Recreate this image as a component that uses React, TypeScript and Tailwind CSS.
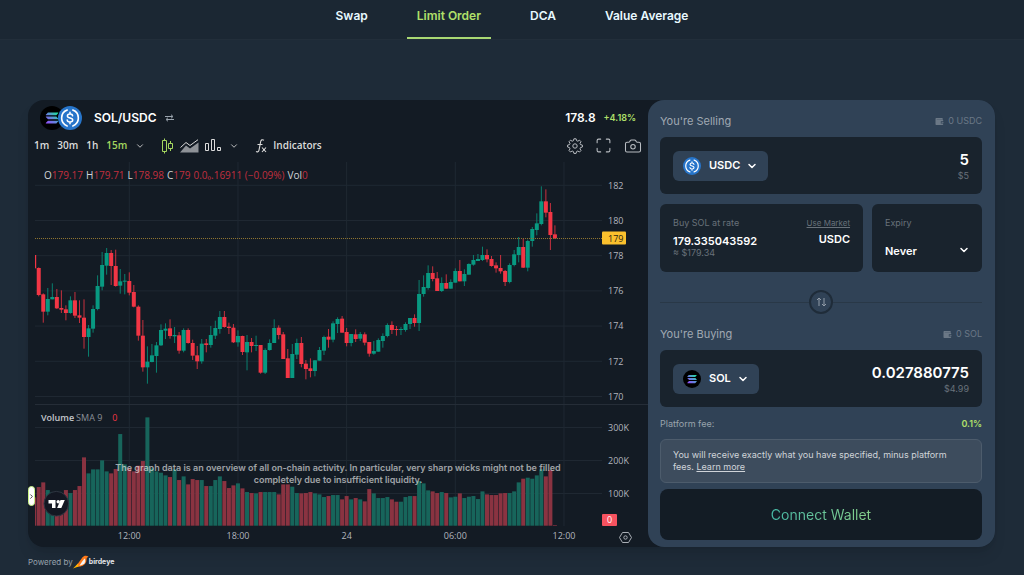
import { useState } from "react";
import { ChevronDown, ChevronRight, Camera, Maximize } from "lucide-react";

// [up, high, body top, body bottom, low, volume in K]
// price values are steps of about 2 cents, counted down from 182.3
const candles: number[][] = [
    [0, 225, 225, 265, 265, 85], [0, 262, 264, 345, 349, 116], [0, 340, 343, 395, 428, 130], [1, 324, 357, 395, 406, 107],
    [1, 310, 351, 358, 358, 100], [0, 327, 351, 385, 387, 92], [0, 331, 384, 389, 399, 97], [0, 376, 388, 399, 421, 107],
    [1, 349, 361, 399, 401, 98], [0, 336, 361, 407, 414, 107], [0, 361, 406, 413, 429, 119], [0, 358, 413, 471, 506, 205],
    [1, 435, 445, 471, 530, 157], [1, 376, 387, 446, 458, 169], [1, 286, 318, 387, 391, 169], [1, 216, 255, 320, 331, 196],
    [1, 204, 219, 257, 284, 163], [0, 210, 219, 258, 315, 157], [0, 209, 258, 318, 320, 170], [1, 267, 304, 317, 341, 275],
    [1, 282, 302, 305, 343, 184], [0, 277, 303, 338, 346, 172], [0, 315, 336, 380, 382, 163], [0, 376, 380, 467, 482, 180],
    [0, 420, 467, 562, 575, 194], [1, 499, 545, 562, 611, 325], [1, 492, 526, 546, 547, 172], [1, 486, 496, 528, 578, 163],
    [1, 433, 450, 496, 498, 159], [1, 430, 446, 452, 477, 151], [0, 418, 445, 468, 476, 146], [1, 441, 465, 469, 489, 169],
    [0, 456, 466, 512, 521, 137], [1, 445, 450, 512, 517, 148], [0, 445, 450, 489, 491, 124], [0, 479, 489, 527, 540, 140],
    [0, 498, 526, 544, 567, 137], [1, 477, 491, 544, 551, 137], [0, 477, 490, 495, 517, 119], [1, 438, 465, 495, 503, 119],
    [1, 422, 444, 467, 477, 137], [1, 393, 411, 447, 461, 148], [0, 393, 411, 441, 443, 134], [0, 428, 440, 444, 462, 113],
    [0, 432, 443, 487, 489, 121], [1, 451, 468, 487, 500, 127], [0, 467, 468, 516, 525, 112], [1, 465, 486, 517, 571, 101],
    [0, 474, 486, 498, 517, 98], [1, 467, 495, 498, 513, 97], [0, 495, 495, 578, 581, 101], [1, 505, 510, 578, 582, 101],
    [1, 478, 489, 510, 512, 101], [1, 418, 444, 489, 489, 101], [0, 436, 443, 465, 478, 94], [0, 456, 463, 537, 537, 124],
    [0, 507, 535, 594, 594, 124], [1, 492, 522, 594, 594, 117], [1, 476, 489, 524, 537, 98], [0, 471, 489, 552, 562, 97],
    [0, 540, 551, 567, 598, 98], [0, 535, 565, 573, 592, 101], [1, 540, 541, 573, 589, 97], [1, 501, 510, 542, 542, 94],
    [1, 467, 471, 512, 525, 86], [0, 447, 470, 479, 503, 89], [1, 424, 430, 479, 487, 92], [1, 412, 417, 432, 459, 92],
    [0, 408, 416, 458, 458, 79], [0, 444, 456, 489, 499, 89], [1, 462, 462, 489, 499, 79], [0, 448, 463, 477, 486, 83],
    [1, 456, 462, 476, 483, 79], [0, 457, 463, 488, 496, 73], [0, 486, 486, 521, 530, 110], [1, 483, 513, 521, 524, 97],
    [1, 475, 480, 515, 515, 83], [1, 460, 468, 483, 503, 83], [1, 430, 435, 468, 472, 86], [0, 424, 435, 450, 462, 79],
    [0, 438, 447, 450, 467, 72], [1, 441, 447, 450, 465, 72], [1, 427, 432, 450, 455, 86], [1, 414, 414, 432, 447, 89],
    [0, 403, 414, 429, 440, 89], [1, 300, 342, 429, 453, 134], [1, 286, 321, 342, 350, 127], [1, 256, 279, 324, 329, 106],
    [0, 259, 279, 297, 304, 103], [0, 276, 295, 333, 333, 98], [1, 292, 309, 333, 336, 101], [0, 283, 309, 326, 326, 98],
    [1, 298, 306, 326, 326, 85], [1, 265, 273, 308, 308, 87], [0, 240, 273, 304, 304, 97], [1, 268, 282, 304, 318, 83],
    [1, 250, 252, 284, 284, 87], [1, 225, 240, 254, 257, 89], [1, 222, 237, 243, 243, 80], [1, 200, 225, 240, 243, 103],
    [0, 208, 225, 238, 247, 94], [0, 228, 237, 258, 260, 92], [0, 247, 256, 265, 278, 92], [0, 225, 264, 274, 281, 97],
    [0, 270, 273, 306, 318, 98], [1, 250, 255, 306, 310, 98], [1, 210, 223, 255, 259, 103], [1, 171, 201, 225, 247, 130],
    [0, 176, 201, 263, 264, 141], [1, 179, 183, 263, 274, 144], [1, 141, 147, 183, 200, 141], [1, 100, 130, 150, 166, 151],
    [1, 19, 64, 132, 136, 169], [0, 28, 64, 98, 112, 148], [0, 69, 96, 165, 210, 167], [0, 136, 163, 175, 177, 2],
];

const prices = [182, 180, 178, 176, 174, 172, 170];
const volumes = ["300K", "200K", "100K"];
const times = ["12:00", "18:00", "24", "06:00", "12:00"];
const tabs = ["Swap", "Limit Order", "DCA", "Value Average"];

const candleX = (i: number) => 6.2 + i * 4.528;
const priceY = (v: number) => 21 + v / 3;

function SolIcon({ size }: { size: number }) {
    return (
        <svg width={size} height={size} viewBox="0 0 24 24" aria-hidden="true">
            <defs>
                <linearGradient id="sol" x1="6" y1="18" x2="18" y2="6" gradientUnits="userSpaceOnUse">
                    <stop stopColor="#9945ff" />
                    <stop offset="0.5" stopColor="#5f8ad8" />
                    <stop offset="1" stopColor="#14f195" />
                </linearGradient>
            </defs>
            <circle cx="12" cy="12" r="12" fill="#000" />
            <path
                fill="url(#sol)"
                d="M8.2 6.5h9.8c.3 0 .5.3.3.5l-1.700 2c-.1.1-.3.2-.4.2H6.100c-.3 0-.5-.3-.3-.5l1.900-2c.1-.1.3-.2.500-.2ZM6.100 10.600H16.200c.1 0 .3.1.4.2l1.700 2c.2.2 0 .5-.3.5H8.200c-.2 0-.3-.1-.4-.2L5.800 11.100c-.2-.2 0-.5.3-.5ZM8.200 14.800h9.800c.3 0 .5.3.3.5l-1.700 2c-.1.1-.3.2-.4.2H6.100c-.3 0-.5-.3-.3-.5l1.900-2c.1-.1.3-.2.500-.2Z"
            />
        </svg>
    );
}

function UsdcIcon({ size }: { size: number }) {
    return (
        <svg width={size} height={size} viewBox="0 0 24 24" aria-hidden="true">
            <circle cx="12" cy="12" r="12" fill="#2775ca" />
            <g fill="none" stroke="#fff" strokeWidth="1.6" strokeLinecap="round">
                <path d="M9.2 4.1a8.4 8.4 0 0 0 0 15.8M14.8 4.1a8.4 8.4 0 0 1 0 15.8" />
                <path strokeWidth="1.5" d="M14.6 9.8c-.2-1.2-1.2-1.8-2.6-1.8-1.5 0-2.6.7-2.6 1.9 0 2.9 5.3 1.3 5.3 4.1 0 1.300-1.200 2-2.700 2-1.600 0-2.700-.700-2.800-2M12 6.300V8M12 16v1.700" />
            </g>
        </svg>
    );
}

function WalletIcon() {
    return (
        <svg width="9" height="9" viewBox="0 0 9 9" fill="currentColor" aria-hidden="true">
            <path d="M1.500 1H7c.5 0 .8.3.8.8v.4H1.800v.4H7.500c.4 0 .7.300.7.700v.9H5.800v2.200h2.400v.9c0 .4-.3.7-.7.7H1.500C.9 8 .5 7.600.5 7V2c0-.6.4-1 1-1ZM6.500 4.900h2v.9h-2Z" />
        </svg>
    );
}

function Chart() {
    return (
        <svg className="block w-full" viewBox="0 0 620 388" role="img" aria-label="SOL/USDC 15 minute chart">
            <defs>
                <clipPath id="plot"><rect x="7" y="0" width="567" height="367" /></clipPath>
            </defs>
            <g stroke="#1f2832" strokeWidth="1">
                {prices.map((p, i) => <line key={p} x1="7" x2="574" y1={26.3 + i * 35.2} y2={26.3 + i * 35.2} />)}
                {volumes.map((v, i) => <line key={v} x1="7" x2="574" y1={268.5 + i * 33} y2={268.5 + i * 33} />)}
                {times.map((_, i) => <line key={i} x1={101.3 + i * 108.67} x2={101.3 + i * 108.67} y1="3" y2="367" />)}
            </g>
            <line x1="7" x2="620" y1="245.500" y2="245.500" stroke="#252d37" />
            <g clipPath="url(#plot)">
                {candles.map(([up, high, top, bottom, low, vol], i) => {
                    const color = up ? "#089981" : "#f23645";
                    return (
                        <g key={i} fill={color}>
                            <rect x={candleX(i) - 2} y={366.7 - vol / 3} width="4" height={vol / 3} fill={up ? "#17655b" : "#8a3341"} />
                            <rect x={candleX(i) - 0.5} y={priceY(high)} width="1" height={(low - high) / 3} opacity="0.8" />
                            <rect x={candleX(i) - 2} y={priceY(top)} width="4" height={Math.max(1, (bottom - top) / 3)} />
                        </g>
                    );
                })}
            </g>
            <line x1="7" x2="574" y1="79.500" y2="79.500" stroke="#8f7430" strokeDasharray="1 1" />
            <rect x="574" y="72.500" width="24" height="13" rx="1" fill="#fbc02d" />
            <rect x="574" y="355" width="15" height="12" rx="1" fill="#f7525f" />
            <g fontFamily="Open Sans, sans-serif" fontSize="9" fontWeight="500" fill="#b2b5be">
                {prices.map((p, i) => <text key={p} x="580" y={29.500 + i * 35.2}>{p}</text>)}
                {volumes.map((v, i) => <text key={v} x="580" y={271.500 + i * 33}>{v}</text>)}
                {times.map((t, i) => <text key={i} x={101.3 + i * 108.67} y="380" textAnchor="middle">{t}</text>)}
                <text x="580" y="82.500" fill="#2a2410">179</text>
                <text x="579" y="364" fill="#fff">0</text>
            </g>
            <g fill="none" stroke="#a9aeb5">
                <path d="M594.500 373.500h6l3 5-3 5h-6l-3-5Z" />
                <circle cx="597.500" cy="378.500" r="1.700" />
            </g>
            <circle cx="28.300" cy="344.700" r="12.300" fill="#131722" stroke="#2f3541" />
            <path fill="#fff" d="M20.500 341h7v8h-3.500v-4.500h-3.500ZM32.500 341h4.300l-3.500 8h-4.200Z" />
            <circle cx="30.200" cy="342.700" r="1.700" fill="#fff" />
        </svg>
    );
}

function ChartPanel() {
    return (
        <section className="min-w-0 flex-1 font-['Open_Sans',sans-serif]">
            <div className="flex h-9 items-center pl-3 pr-3 font-['Inter',sans-serif]">
                <div className="flex items-center">
                    <SolIcon size={24} />
                    <span className="-ml-1.5 flex"><UsdcIcon size={24} /></span>
                </div>
                <h1 className="ml-3 text-xs font-semibold text-white">SOL/USDC</h1>
                <button type="button" aria-label="Switch pair" className="ml-2 text-[#9aa4ae]">
                    <svg width="9" height="8" viewBox="0 0 9 8" fill="none" stroke="currentColor">
                        <path d="M0 2.500h7.500M6 .7l2 1.800-2 1.800M9 5.500H1.500M3 3.700l-2 1.800 2 1.800" />
                    </svg>
                </button>
                <span className="ml-auto text-xs font-semibold text-white">178.8</span>
                <span className="ml-2 text-[9px] font-semibold text-[#b0e06a]">+4.18%</span>
            </div>
            <div className="flex h-[23px] items-center pb-1 pl-1.5 pr-1.5 text-[10px] font-semibold text-[#dbdbdb]">
                <div className="flex gap-2">
                    <button type="button">1m</button>
                    <button type="button">30m</button>
                    <button type="button">1h</button>
                    <button type="button" className="text-[#a5d75f]">15m</button>
                </div>
                <button type="button" aria-label="More intervals" className="ml-2"><ChevronDown size={10} /></button>
                <button type="button" aria-label="Candles" className="ml-4 text-[#a5d75f]">
                    <svg width="13" height="16" viewBox="0 0 13 16" fill="none" stroke="currentColor">
                        <path d="M3.500 .5v2M3.500 13.500v2M1.500 2.500h4v11h-4ZM9.500 3v2.500M9.500 10.500v2.500M7.500 5.500h4v5h-4Z" />
                    </svg>
                </button>
                <button type="button" aria-label="Area" className="ml-1.5">
                    <svg width="19" height="14" viewBox="0 0 19 14" fill="none" stroke="currentColor">
                        <path d="M.5 8.500 6 3.500l4 3L18 .7" />
                        <path fill="#8e9297" stroke="none" d="M0 13.500 6 6.500l4 3 8.500-6v10Z" />
                    </svg>
                </button>
                <button type="button" aria-label="Columns" className="ml-1.5">
                    <svg width="16" height="13" viewBox="0 0 16 13" fill="none" stroke="currentColor">
                        <path d="M.5 4.500h3v7h-3ZM6.500.5h3v11h-3ZM12.500 8.500h3v3h-3Z" />
                    </svg>
                </button>
                <button type="button" aria-label="More chart types" className="ml-2"><ChevronDown size={10} /></button>
                <button type="button" className="ml-4 flex items-center gap-1.5">
                    <svg width="12" height="14" viewBox="0 0 12 14" fill="none" stroke="currentColor" strokeWidth="1.100" aria-hidden="true">
                        <path d="M9 1.200C7.300.3 6 .8 5.700 2.500L4 11.200c-.3 1.500-1.500 2-3 1.400M2.500 5.500h5M7 8.500l4 4.500M11 8.500 7 13" />
                    </svg>
                    Indicators
                </button>
                <div className="ml-auto flex items-center gap-3 text-[#b9bdc2]">
                    <button type="button" aria-label="Settings">
                        <svg width="16" height="16" viewBox="0 0 16 16" fill="none" stroke="currentColor">
                            <path strokeLinejoin="round" d="M6.900.8h2.200l.5 1.900 1.200.5 1.700-1 1.500 1.500-1 1.700.5 1.200 1.900.5v1.900l-1.900.6-.5 1.200 1 1.700-1.500 1.500-1.700-1-1.200.5-.5 1.900H6.900l-.5-1.900-1.200-.5-1.700 1L2 12.500l1-1.700-.5-1.200-1.900-.6V7.100l1.900-.5L3 5.400l-1-1.700 1.500-1.500 1.700 1 1.200-.5Z" />
                            <circle cx="8" cy="8" r="2.200" />
                        </svg>
                    </button>
                    <button type="button" aria-label="Fullscreen"><Maximize size={17} strokeWidth={1.5} /></button>
                    <button type="button" aria-label="Snapshot"><Camera size={18} strokeWidth={1.400} /></button>
                </div>
            </div>
            <div className="relative">
                <Chart />
                <p className="absolute left-4 top-[9px] flex gap-[3px] text-[10px] leading-[14px] text-[#d0d3d8]">
                    <span>O<span className="text-[#c22f3f]">179.17</span></span>
                    <span>H<span className="text-[#c22f3f]">179.71</span></span>
                    <span>L<span className="text-[#c22f3f]">178.98</span></span>
                    <span>C<span className="text-[#c22f3f]">179</span></span>
                    <span className="text-[#c22f3f]">0.0₀.16911 (−0.09%)</span>
                    <span>Vol<span className="text-[#c22f3f]">0</span></span>
                </p>
                <p className="absolute left-[13px] top-[252px] flex text-[9px] text-[#8b9098]">
                    <span className="mr-0.5 font-semibold text-[#c4c7cc]">Volume</span>SMA 9
                    <span className="ml-2.5 text-[#f23645]">0</span>
                </p>
                <p className="absolute inset-x-0 top-[303px] text-center font-['Inter',sans-serif] text-[9px] font-semibold leading-3 text-white/60">
                    The graph data is an overview of all on-chain activity. In particular, very sharp wicks might not be filled
                    <br />
                    completely due to insufficient liquidity.
                </p>
                <button type="button" aria-label="Show drawing tools"
                    className="absolute left-0 top-[327px] flex h-5 w-[7px] items-center justify-center rounded-sm border border-[#c8f284] bg-white text-[#333]">
                    <ChevronRight size={7} strokeWidth={3} className="shrink-0" />
                </button>
            </div>
        </section>
    );
}

function TokenButton({ symbol }: { symbol: "USDC" | "SOL" }) {
    return (
        <button type="button" className="flex h-[30px] items-center rounded-md bg-[#304256] px-2.5 text-[11px] font-semibold text-white">
            {symbol === "SOL" ? <SolIcon size={18} /> : <UsdcIcon size={18} />}
            <span className="ml-2">{symbol}</span>
            <ChevronDown size={12} strokeWidth={3} className="ml-1.5" />
        </button>
    );
}

function OrderForm() {
    const [amount, setAmount] = useState("5");
    const [rate, setRate] = useState("179.335043592");
    const [expiry, setExpiry] = useState("Never");

    return (
        <form className="flex w-[347px] shrink-0 flex-col rounded-2xl bg-[#304256] pb-[7px] pl-3 pr-[13px] pt-3" onSubmit={(e) => e.preventDefault()}>
            <div className="flex h-[18px] items-center justify-between">
                <label htmlFor="amount" className="text-[11px] text-[#a0a9b3]">You're Selling</label>
                <span className="flex items-center gap-1 text-[9px] text-[#6b7886]"><WalletIcon />0 USDC</span>
            </div>
            <div className="mt-[7px] flex h-[57px] items-center justify-between rounded-md bg-[#19232d] px-[13px]">
                <TokenButton symbol="USDC" />
                <div className="flex flex-col items-end">
                    <input id="amount" className="w-36 bg-transparent text-right text-[15px] font-semibold leading-5 text-white outline-none"
                        value={amount} onChange={(e) => setAmount(e.target.value)} />
                    <span className="text-[9px] leading-3 text-[#68717a]">$5</span>
                </div>
            </div>

            <div className="mt-2.5 flex gap-[9px]">
                <div className="flex h-[68px] flex-1 justify-between rounded-md bg-[#19232d] px-[13px] py-3">
                    <div className="flex flex-col">
                        <label htmlFor="rate" className="text-[9px] leading-[14px] text-[#68717a]">Buy SOL at rate</label>
                        <input id="rate" className="mt-1 w-28 bg-transparent text-[11px] font-semibold leading-[14px] text-white outline-none"
                            value={rate} onChange={(e) => setRate(e.target.value)} />
                        <span className="text-[9px] leading-[10px] text-[#68717a]">≈ $179.34</span>
                    </div>
                    <div className="flex flex-col items-end">
                        <button type="button" className="text-[8px] leading-[14px] text-[#68717a] underline">Use Market</button>
                        <span className="mt-0.5 text-[11px] font-semibold leading-[14px] text-white">USDC</span>
                    </div>
                </div>
                <div className="relative flex h-[68px] w-[110px] flex-col rounded-md bg-[#19232d] px-[13px] py-3">
                    <label htmlFor="expiry" className="text-[9px] leading-[14px] text-[#68717a]">Expiry</label>
                    <select id="expiry" className="mt-[13px] appearance-none bg-transparent text-[11px] font-semibold leading-4 text-white outline-none"
                        value={expiry} onChange={(e) => setExpiry(e.target.value)}>
                        <option>Never</option>
                        <option>1 Day</option>
                        <option>7 Days</option>
                    </select>
                    <ChevronDown size={12} strokeWidth={3} className="pointer-events-none absolute bottom-4 right-3 text-white" />
                </div>
            </div>

            <div className="mt-[18px] flex items-center">
                <div className="h-px flex-1 bg-[#293847]" />
                <button type="button" aria-label="Switch tokens" className="flex size-6 items-center justify-center rounded-full border-2 border-[#1f2c39] text-[#919ca8]">
                    <svg width="11" height="10" viewBox="0 0 11 10" fill="none" stroke="currentColor">
                        <path d="M3 9V1M1 3l2-2 2 2M8 1v8M6 7l2 2 2-2" />
                    </svg>
                </button>
                <div className="h-px flex-1 bg-[#293847]" />
            </div>

            <div className="mt-[11px] flex h-[18px] items-center justify-between">
                <label htmlFor="receive" className="text-[11px] text-[#a0a9b3]">You're Buying</label>
                <span className="flex items-center gap-1 text-[9px] text-[#6b7886]"><WalletIcon />0 SOL</span>
            </div>
            <div className="mt-[7px] flex h-[57px] items-center justify-between rounded-md bg-[#19232d] px-[13px]">
                <TokenButton symbol="SOL" />
                <div className="flex flex-col items-end">
                    <input id="receive" readOnly className="w-36 bg-transparent text-right text-[15px] font-semibold leading-5 text-white outline-none" value="0.027880775" />
                    <span className="text-[9px] leading-3 text-[#68717a]">$4.99</span>
                </div>
            </div>

            <div className="mt-2 flex h-[17px] items-center justify-between text-[9px]">
                <span className="text-[#98a2ac]">Platform fee:</span>
                <span className="font-semibold text-[#b0e06a]">0.1%</span>
            </div>
            <p className="mt-[7px] rounded-md border border-[#4d5c6c] bg-[#3d4c5d] py-[9px] pl-3 pr-6 text-[9px] leading-3 text-[#d0d4d9]">
                You will receive exactly what you have specified, minus platform fees. <a href="#" className="underline">Learn more</a>
            </p>
            <button type="submit" className="mt-1.5 h-[51px] rounded-lg bg-[#131c25] text-sm">
                <span className="bg-linear-to-r from-[#45b8a5] to-[#86d08a] bg-clip-text text-transparent">Connect Wallet</span>
            </button>
        </form>
    );
}

export default function App() {
    return (
        <div className="min-h-screen bg-[#1e2b38] font-['Inter',sans-serif]">
            <header className="border-b border-[#222e3a] bg-[#1b2733]">
                <nav className="flex justify-center gap-[29px]">
                    {tabs.map((tab) => (
                        <a key={tab} href="#"
                            className={`border-b-2 px-[10px] pb-[13px] pt-2 text-xs font-semibold ${tab === "Limit Order" ? "border-[#a9d873] text-[#b0e06a]" : "border-transparent text-[#e8f9ff]"}`}>
                            {tab}
                        </a>
                    ))}
                </nav>
            </header>
            <main className="pb-1 pl-7 pr-[29px] pt-[60px]">
                <div className="flex rounded-2xl bg-[#131b24] shadow-lg">
                    <ChartPanel />
                    <OrderForm />
                </div>
                <footer className="mt-2 flex items-center text-[8px] text-[#98a2ac]">
                    Powered by
                    <svg width="16" height="14" viewBox="0 0 16 14" aria-hidden="true">
                        <path fill="#ff7a1a" d="M15.500 1.800C14 .3 11 .2 9.500 2.300L5 8.500 2.500 11.500c4 .8 9-.5 10.500-4 .7-1.700.3-3.500.9-4.700Z" />
                        <path fill="#f5f5f5" d="M11.500 3.500c1.500 1.500 1 4.500-1.500 6L6.500 10.800c1.500-2.500 3-5 5-7.300Z" />
                        <path fill="#ffb400" d="M5 8.500 0 13.500l5.500-2Z" />
                    </svg>
                    <span className="text-[7px] font-bold text-[#e1e4e8]">birdeye</span>
                </footer>
            </main>
        </div>
    );
}
